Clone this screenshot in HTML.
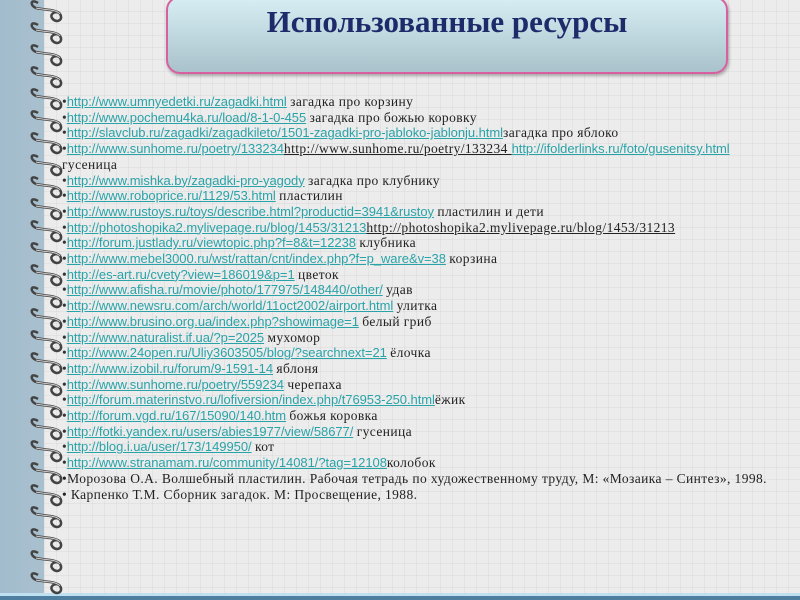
<!DOCTYPE html>
<html><head><meta charset="utf-8"><style>
html,body{margin:0;padding:0}
body{width:800px;height:600px;overflow:hidden;position:relative;background:#e9e9e9;font-family:"Liberation Serif",serif}
.left{position:absolute;left:0;top:0;width:46px;height:600px;background:linear-gradient(90deg,#a2bccd,#a9c0ce)}
.paper{position:absolute;left:44px;top:0;width:756px;height:594px;
background-color:#ececec;
background-image:linear-gradient(90deg,rgba(190,190,190,.2) 1px,transparent 1px),linear-gradient(0deg,rgba(190,190,190,.2) 1px,transparent 1px);
background-size:12px 12px}
.bottom{position:absolute;left:0;top:593px;width:800px;height:7px;background:linear-gradient(#bfe0f0 0,#bfe0f0 3px,#4f7fa0 3px)}
.title{position:absolute;left:166px;top:-4px;width:558px;height:74px;border:2px solid #d860a0;border-radius:14px;background:linear-gradient(#d6eef3,#a9c2cb);box-shadow:1px 2px 3px rgba(0,0,0,.3)}
.title div{position:absolute;left:0;right:0;top:6px;text-align:center;font:bold 31px "Liberation Serif",serif;color:#1f2a6a}
.list{position:absolute;left:62px;top:94px;font-size:13.5px;line-height:15.7px;color:#333}
.list div{white-space:nowrap}
a{color:#2aa3a8;text-decoration:underline;font-family:"Liberation Sans",sans-serif;font-size:13px;letter-spacing:-.05px}
.k{color:#222;font-family:"Liberation Serif",serif;font-size:13.5px;letter-spacing:.4px}
</style></head><body>
<div class="left"></div>
<div class="paper"></div>
<div class="bottom"></div>
<svg style="position:absolute;left:0;top:0" width="70" height="600">
<defs><g id="s"><path d="M38 3 C30 -2 30 6 36 8 C44 10 56 9 60 14 C64 20 56 24 52 18 C49 13 58 10 60 14" fill="none" stroke="#444" stroke-width="2.5"/><path d="M36 8 C44 10 56 9 60 14" fill="none" stroke="#ccc" stroke-width="1"/></g></defs>
<use href="#s" y="0"/><use href="#s" y="22"/><use href="#s" y="44"/><use href="#s" y="66"/><use href="#s" y="88"/><use href="#s" y="110"/><use href="#s" y="132"/><use href="#s" y="154"/><use href="#s" y="176"/><use href="#s" y="198"/><use href="#s" y="220"/><use href="#s" y="242"/><use href="#s" y="264"/><use href="#s" y="286"/><use href="#s" y="308"/><use href="#s" y="330"/><use href="#s" y="352"/><use href="#s" y="374"/><use href="#s" y="396"/><use href="#s" y="418"/><use href="#s" y="440"/><use href="#s" y="462"/><use href="#s" y="484"/><use href="#s" y="506"/><use href="#s" y="528"/><use href="#s" y="550"/><use href="#s" y="572"/>
</svg>
<div class="title"><div>Использованные ресурсы</div></div>
<div class="list">
<div>•<a>http://www.umnyedetki.ru/zagadki.html</a> <span class="k">загадка про корзину</span></div>
<div>•<a>http://www.pochemu4ka.ru/load/8-1-0-455</a> <span class="k">загадка про божью коровку</span></div>
<div>•<a>http://slavclub.ru/zagadki/zagadkileto/1501-zagadki-pro-jabloko-jablonju.html</a><span class="k">загадка про  яблоко</span></div>
<div>•<a>http://www.sunhome.ru/poetry/133234</a><span class="k" style="text-decoration:underline">http://www.sunhome.ru/poetry/133234 </span><a>http://ifolderlinks.ru/foto/gusenitsy.html</a></div>
<div><span class="k">гусеница</span></div>
<div>•<a>http://www.mishka.by/zagadki-pro-yagody</a> <span class="k">загадка про клубнику</span></div>
<div>•<a>http://www.roboprice.ru/1129/53.html</a> <span class="k">пластилин</span></div>
<div>•<a>http://www.rustoys.ru/toys/describe.html?productid=3941&amp;rustoy</a> <span class="k">пластилин и дети</span></div>
<div>•<a>http://photoshopika2.mylivepage.ru/blog/1453/31213</a><span class="k" style="text-decoration:underline">http://photoshopika2.mylivepage.ru/blog/1453/31213</span></div>
<div>•<a>http://forum.justlady.ru/viewtopic.php?f=8&amp;t=12238</a> <span class="k">клубника</span></div>
<div>•<a>http://www.mebel3000.ru/wst/rattan/cnt/index.php?f=p_ware&amp;v=38</a> <span class="k">корзина</span></div>
<div>•<a>http://es-art.ru/cvety?view=186019&amp;p=1</a>  <span class="k">цветок</span></div>
<div>•<a>http://www.afisha.ru/movie/photo/177975/148440/other/</a>  <span class="k">удав</span></div>
<div>•<a>http://www.newsru.com/arch/world/11oct2002/airport.html</a>  <span class="k">улитка</span></div>
<div>•<a>http://www.brusino.org.ua/index.php?showimage=1</a>  <span class="k">белый гриб</span></div>
<div>•<a>http://www.naturalist.if.ua/?p=2025</a>  <span class="k">мухомор</span></div>
<div>•<a>http://www.24open.ru/Uliy3603505/blog/?searchnext=21</a> <span class="k">ёлочка</span></div>
<div>•<a>http://www.izobil.ru/forum/9-1591-14</a> <span class="k">яблоня</span></div>
<div>•<a>http://www.sunhome.ru/poetry/559234</a> <span class="k">черепаха</span></div>
<div>•<a>http://forum.materinstvo.ru/lofiversion/index.php/t76953-250.html</a><span class="k">ёжик</span></div>
<div>•<a>http://forum.vgd.ru/167/15090/140.htm</a>  <span class="k">божья коровка</span></div>
<div>•<a>http://fotki.yandex.ru/users/abies1977/view/58677/</a>  <span class="k">гусеница</span></div>
<div>•<a>http://blog.i.ua/user/173/149950/</a>  <span class="k">кот</span></div>
<div>•<a>http://www.stranamam.ru/community/14081/?tag=12108</a><span class="k">колобок</span></div>
<div><span class="k">•Морозова О.А.  Волшебный пластилин. Рабочая тетрадь по художественному труду, М: «Мозаика – Синтез», 1998.</span></div>
<div><span class="k">• Карпенко Т.М. Сборник загадок. М: Просвещение, 1988.</span></div>
</div>
</body></html>
